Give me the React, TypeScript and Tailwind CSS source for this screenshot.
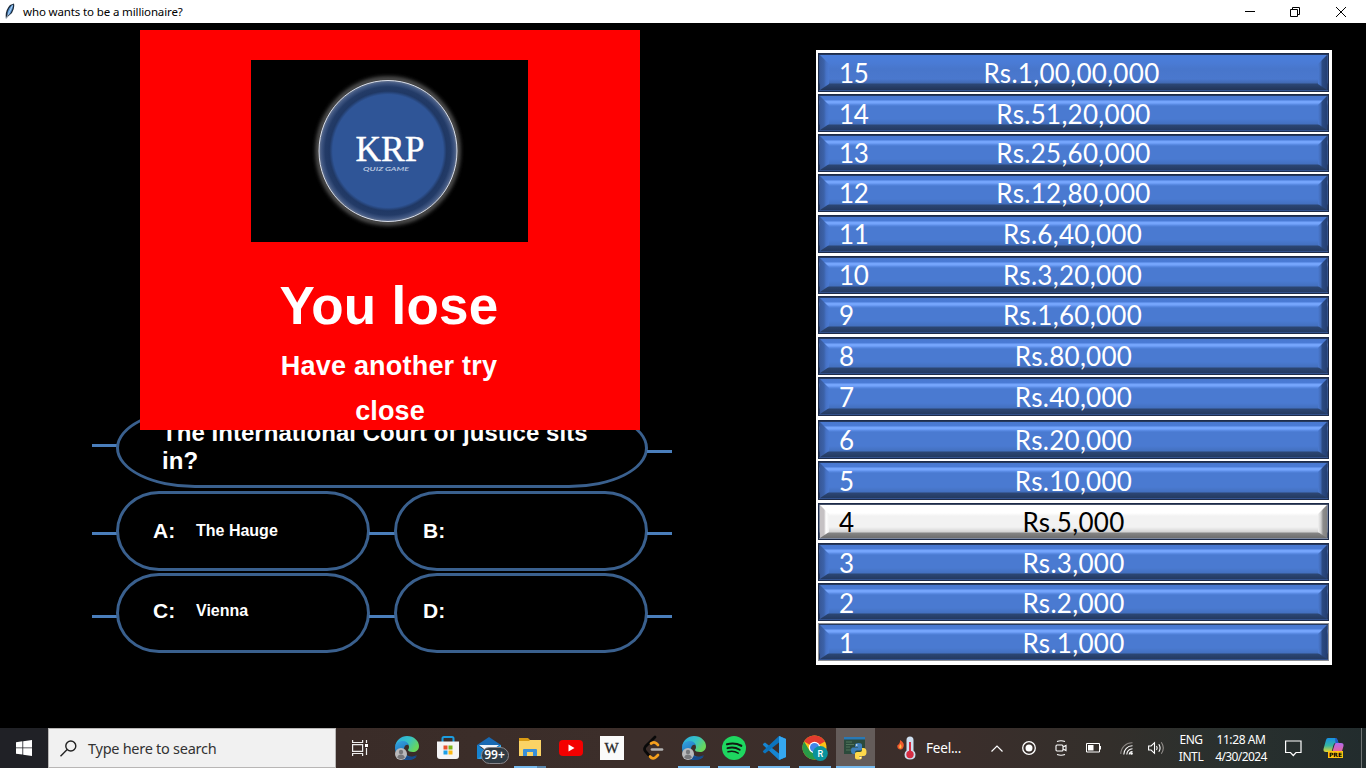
import React from "react";

const prizes = [
  { n: 15, amount: "Rs.1,00,00,000", cls: "h-[39px] mb-[2px]" },
  { n: 14, amount: "Rs.51,20,000", cls: "h-[38px] mb-[2px]" },
  { n: 13, amount: "Rs.25,60,000", cls: "h-[38px] mb-[2px]" },
  { n: 12, amount: "Rs.12,80,000", cls: "h-[38px] mb-[3px]" },
  { n: 11, amount: "Rs.6,40,000", cls: "h-[38px] mb-[3px]" },
  { n: 10, amount: "Rs.3,20,000", cls: "h-[38px] mb-[2px]" },
  { n: 9, amount: "Rs.1,60,000", cls: "h-[38px] mb-[3px]" },
  { n: 8, amount: "Rs.80,000", cls: "h-[38px] mb-[2px]" },
  { n: 7, amount: "Rs.40,000", cls: "h-[39px] mb-[4px]" },
  { n: 6, amount: "Rs.20,000", cls: "h-[39px] mb-[2px]" },
  { n: 5, amount: "Rs.10,000", cls: "h-[39px] mb-[3px]" },
  { n: 4, amount: "Rs.5,000", cls: "h-[37px] mb-[3px]" },
  { n: 3, amount: "Rs.3,000", cls: "h-[38px] mb-[2px]" },
  { n: 2, amount: "Rs.2,000", cls: "h-[38px] mb-[2px]" },
  { n: 1, amount: "Rs.1,000", cls: "h-[38px]" },
];

function PrizeRow({ n, amount, cls }: { n: number; amount: string; cls: string }) {
  const active = n === 4;
  const face = active
    ? "bg-[linear-gradient(to_bottom,#fff_0,#fff_8px,#f2f2f2_11px,#f2f2f2_calc(100%-11px),#d4d4d4_calc(100%-6px),#858585_calc(100%-5px),#6e6e6e_100%)] text-black"
    : n === 15
      ? "bg-[linear-gradient(to_bottom,#4a7edb_0,#4a7bd5_8px,#4876cb_14px,#4a78ce_calc(100%-11px),#4169b2_calc(100%-7px),#2c4775_calc(100%-6px),#213457_100%)] text-white"
      : "bg-[linear-gradient(to_bottom,#4878d0_0,#4a7bd6_4px,#75a5fc_5px,#75a5fc_7px,#5f90ea_8px,#4a7ad1_10px,#4a7ad1_calc(100%-11px),#4370bf_calc(100%-6px),#2c4673_calc(100%-5px),#243a61_100%)] text-white";
  return (
    <div className={"relative w-[511px] shrink-0 border " + (n === 1 ? "border-[#8b8d93] " : "border-[#1d2b49] ") + cls}>
      <div className={"flex h-full items-center border border-[#26395f]/60 pl-[19px] text-[26px] leading-none [font-family:Lato,sans-serif] " + (n > 13 || n === 7 || n === 5 || n < 5 ? "pt-[1px] " : "") + face}>
        <span className="w-[60px] tracking-[-0.3px]">{n}</span>
        <span className={"text-center tracking-[0.3px] " + (n === 15 ? "w-[345px]" : n > 8 && n < 12 ? "w-[347px]" : "w-[349px]")}>{amount}</span>
      </div>
      <span className={"absolute inset-y-[1px] left-[1px] w-[9px] [clip-path:polygon(0_0,100%_9px,100%_calc(100%-6px),0_100%)] " + (active ? "bg-[linear-gradient(to_right,#c5c1c3_0,#c5c1c3_4px,#fff_6px,#f2f2f2_100%)]" : "bg-[linear-gradient(to_right,#38599a_0,#3c62a8_4px,#4672c6_6px,#4a7ad1_100%)]")} />
      <span className={"absolute inset-y-[1px] right-[1px] w-[9px] [clip-path:polygon(100%_0,0_9px,0_calc(100%-6px),100%_100%)] " + (active ? "bg-[linear-gradient(to_left,#808080_0,#8d8d8d_4px,#cfcfcf_6px,#f2f2f2_100%)]" : "bg-[linear-gradient(to_left,#243f73_0,#2b4a82_5px,#4169b3_6px,#4a7ad1_100%)]")} />
    </div>
  );
}

function Wire({ cls }: { cls: string }) {
  return <span className={"h-[3px] shrink-0 bg-[#4a7ebb] " + cls} />;
}

function Answer({ label, text, cls }: { label: string; text: string; cls: string }) {
  return (
    <div className={"flex h-[80px] w-[254px] shrink-0 items-center rounded-[43px/40px] border-[3px] border-[#3a608e] font-bold text-white " + cls}>
      <span className="w-[43px] text-[21px] leading-[24px]">{label}</span>
      <span className="text-[16px] leading-[18px]">{text}</span>
    </div>
  );
}

function EdgeIcon({ id }: { id: string }) {
  return (
    <svg width="26" height="26" viewBox="0 0 26 26">
      <defs>
        <linearGradient id={id + "a"} x1="0" y1="0" x2="1" y2="0.5"><stop offset="0" stopColor="#2ba9e0" /><stop offset="0.55" stopColor="#35c1c8" /><stop offset="1" stopColor="#68d85b" /></linearGradient>
        <linearGradient id={id + "b"} x1="0" y1="0" x2="0.6" y2="1"><stop offset="0" stopColor="#35a5e2" /><stop offset="1" stopColor="#1259a6" /></linearGradient>
      </defs>
      <path d="M1 12C2 5 7 1 13 1c7 0 12 5 12 10 0 4-3 6-6 6-3 0-5-1-5-2 0-1 1-1 1-3 0-3-3-5-6-5-4 0-7 2-8 5Z" fill={"url(#" + id + "a)"} />
      <path d="M1 13c0-5 4-7 8-7 3 0 5 2 6 4-2-1-5 0-5 4 0 5 4 8 9 8 2 0 3 0 4-1-2 3-6 4-10 4C6 25 1 19 1 13Z" fill={"url(#" + id + "b)"} />
      <path d="M9 14c0 7 6 10 14 6-2 3-5 5-9 5-5-1-7-6-5-11Z" fill="#174b8b" />
      <circle cx="7" cy="19" r="6" fill="#b9b9bb" />
      <circle cx="7" cy="17" r="2.2" fill="#77777a" />
      <path d="M3.2 22.5c.5-4 7-4 7.6 0-2 2-5.500 2-7.600 0Z" fill="#77777a" />
    </svg>
  );
}

function StoreIcon() {
  return (
    <svg width="24" height="26" viewBox="0 0 24 26">
      <path d="M6.500 8V3.500Q6.500 2 8 2h8q1.500 0 1.500 1.500V8" fill="none" stroke="#1b9de0" strokeWidth="2" />
      <path d="M1 6.500h22V21q0 3-3 3H4q-3 0-3-3Z" fill="#f4f4f5" />
      <path d="M7.500 10.500h4v4h-4z" fill="#e9512c" /><path d="M12.500 10.500h4v4h-4z" fill="#7cb518" />
      <path d="M7.500 15.500h4v4h-4z" fill="#1a9fe8" /><path d="M12.500 15.500h4v4h-4z" fill="#fcb813" />
    </svg>
  );
}

function MailIcon() {
  return (
    <span className="relative flex h-[26px] w-[24px]">
      <svg width="24" height="26" viewBox="0 0 24 26">
        <path d="M0 10 12 2l12 8v2H0Z" fill="#1769b3" />
        <path d="M2 10h20l-10 8Z" fill="#eef4fa" />
        <path d="M0 10l12 8-12 6Z" fill="#1683d0" /><path d="M24 10 12 18l12 6Z" fill="#44b5f1" />
        <path d="M0 24l12-8 12 8Z" fill="#2aa0e6" />
      </svg>
      <span className="absolute top-[12px] left-[4px] flex h-[17px] w-[28px] items-center justify-center rounded-full border border-[#89868a] bg-[#303b43] pb-px text-[12px] font-semibold text-white [font-family:'Noto_Sans',sans-serif]">99+</span>
    </span>
  );
}

function FolderIcon() {
  return (
    <svg width="24" height="22" viewBox="0 0 24 22">
      <path d="M1 1h9l2 2h11v9H1Z" fill="#d99b14" />
      <path d="M1 4h10l1-1h11v16H1Z" fill="#fbd365" />
      <path d="M5 19v-6q0-1 1-1h12q1 0 1 1v6h-4v-4H9v4Z" fill="#3a8fd8" />
    </svg>
  );
}

function YouTubeIcon() {
  return (
    <svg width="24" height="18" viewBox="0 0 24 18">
      <rect y="1" width="24" height="16" rx="4" fill="#f40000" />
      <path d="M9.500 5.500v7l6-3.500Z" fill="#fff" />
    </svg>
  );
}

function LeetCodeIcon() {
  return (
    <svg width="22" height="26" viewBox="0 0 22 26" fill="none" strokeLinecap="round" strokeWidth="2.700">
      <path d="M13 2 3.500 11.500q-2 2.500 0 5L8 21.500" stroke="#090909" />
      <path d="m9 8.500 2-1q2-.5 3.500 1L16 10M8 21.500q3 3.500 6 .5L16 20" stroke="#f5a01d" />
      <path d="M10 14.500h10" stroke="#b3b3b3" />
    </svg>
  );
}

function SpotifyIcon() {
  return (
    <svg width="24" height="24" viewBox="0 0 24 24" fill="none" stroke="#101a12" strokeLinecap="round">
      <circle cx="12" cy="12" r="12" fill="#1ed760" stroke="none" />
      <path d="M5 8.300c5-1.400 10-.9 14.300 1.500" strokeWidth="2.200" />
      <path d="M5.500 12.200c4.300-1.200 8.500-.7 12.200 1.500" strokeWidth="1.900" />
      <path d="M6 15.800c3.600-.9 7-.6 10.200 1.300" strokeWidth="1.500" />
    </svg>
  );
}

function CodeIcon() {
  return (
    <svg width="24" height="24" viewBox="0 0 24 24">
      <path d="M17 0 24 3v18l-7 3L1.500 9.500q-1.300-1 0-2L3 6.500l14 11Z" fill="#1685d1" />
      <path d="M17 24 24 21V3l-7-3L1.500 14.500q-1.300 1 0 2L3 17.500l14-11Z" fill="#0b74be" />
      <path d="m17 0 7 3v18l-7 3Z" fill="#35a7f0" />
    </svg>
  );
}

function ChromeIcon() {
  return (
    <svg width="26" height="26" viewBox="0 0 26 26">
      <circle cx="12.500" cy="12.500" r="12" fill="#fbc116" />
      <path d="M12.500 12.500 2.100 6.500A12 12 0 0 1 22.900 6.500Z" fill="#e33b2e" />
      <path d="M2.100 6.500A12 12 0 0 0 12.500 24.500l5-9-10 0Z" fill="#299b48" />
      <path d="M12.500 7h10.700l-.3-.5H12.500Z" fill="#e33b2e" />
      <circle cx="12.500" cy="12.500" r="5.700" fill="#fff" /><circle cx="12.500" cy="12.500" r="4.500" fill="#4285e8" />
      <circle cx="18.300" cy="18.500" r="7.500" fill="#0a929c" />
      <text x="18.300" y="21.800" textAnchor="middle" fontFamily="Roboto" fontWeight="500" fontSize="9" fill="#fff">R</text>
    </svg>
  );
}

function PythonIcon() {
  return (
    <svg width="23" height="24" viewBox="0 0 23 24">
      <path d="M0 1h21v17H0Z" fill="#2c4a3b" /><path d="M0 1h21v2.500H0Z" fill="#2979b6" />
      <path d="M2 6h6M2 8.500h8M2 11h4M2 14h5" stroke="#50745a" />
      <path d="M14.500 7q3.500 0 3.500 2v4q0 1.500-2 1.500h-3q-2 0-2 2v1.500H9.500Q7 18 7 14.500T9.500 11.500H14V11h-3V9q0-2 3.500-2Z" fill="#3e7fb9" />
      <path d="M14.500 23.500q-3.500 0-3.500-2v-4q0-1.500 2-1.500h3q2 0 2-2v-2h1.500q3 0 3 4t-3 4H15v.5h3v1q0 2-3.500 2Z" fill="#ffd94b" />
      <circle cx="12.700" cy="9" r=".8" fill="#fff" /><circle cx="16.300" cy="21.700" r=".8" fill="#fff" />
    </svg>
  );
}

const apps = [
  { icon: <EdgeIcon id="e1" />, cls: "w-[41px]", line: "" },
  { icon: <StoreIcon />, cls: "w-[41px]", line: "" },
  { icon: <MailIcon />, cls: "w-[41px]", line: "" },
  { icon: <FolderIcon />, cls: "w-[41px]", line: "bg-[linear-gradient(to_right,#76b9ed_0,#76b9ed_23px,#5a86ab_23px)]" },
  { icon: <YouTubeIcon />, cls: "w-[41px]", line: "" },
  { icon: <span className="flex h-6 w-6 items-center justify-center bg-[#fafafa] pt-px text-[15px] text-[#222] [font-family:'Liberation_Serif',serif] [-webkit-text-stroke:0.3px_#333]">W</span>, cls: "w-[41px]", line: "" },
  { icon: <LeetCodeIcon />, cls: "w-[41px]", line: "" },
  { icon: <EdgeIcon id="e2" />, cls: "w-[41px]", line: "bg-[#76b9ed]" },
  { icon: <SpotifyIcon />, cls: "w-[40px]", line: "bg-[#76b9ed]" },
  { icon: <CodeIcon />, cls: "w-[40px]", line: "bg-[#76b9ed]" },
  { icon: <ChromeIcon />, cls: "w-[41px]", line: "bg-[#76b9ed]" },
  { icon: <PythonIcon />, cls: "ml-[1px] w-[39px] bg-[#645c5a]", line: "bg-[#76b9ed]" },
];

function Taskbar() {
  return (
    <footer className="flex h-10 w-full shrink-0 items-center bg-[linear-gradient(to_right,#202126_0,#202126_40px,#3a2c28_340px,#3c2e2a_620px,#3b2e2b_950px,#332f2b_1110px,#29302e_1230px,#222c2d_1366px)] text-white [font-family:'Noto_Sans',sans-serif]">
      <div className="flex w-12 justify-center">
        <svg width="16" height="16" viewBox="0 0 16 16" fill="#fff"><path d="M0 2.200 6.400 1.300v6.200H0ZM7.200 1.200 16 0v7.500H7.200ZM0 8.300h6.400v6.300L0 13.700ZM7.200 8.300H16V16l-8.800-1.300Z" /></svg>
      </div>
      <div className="flex h-10 w-72 items-center border border-[#b8b6b5] bg-[#f1f1f1] pl-[11px]">
        <svg width="17" height="17" viewBox="0 0 17 17" fill="none" stroke="#222" strokeWidth="1.400"><circle cx="10.800" cy="6" r="5" /><path d="M7.200 9.600.5 16.300" /></svg>
        <span className="mt-[2px] ml-[11px] text-[14.5px] tracking-[-0.27px] text-[#333]">Type here to search</span>
      </div>
      <div className="flex w-[50px] pl-4">
        <svg width="17" height="16" viewBox="0 0 17 16" fill="none" stroke="#eee" strokeWidth="1.200"><path d="M.6 0v2.500h10V0M.6 16v-2.500h10V16M.6 4.600h10v6.800H.6ZM14.500 0v3M14.500 8v7" /><path d="M13 4h3v3h-3z" fill="#fff" stroke="none" /></svg>
      </div>
      {apps.map((a, i) => (
        <div key={i} className={"relative flex h-10 shrink-0 items-center justify-center " + a.cls}>
          {a.icon}
          {a.line && <span className={"absolute bottom-0 h-[2px] " + (i === 11 ? "w-[39px] " : "w-8 ") + a.line} />}
        </div>
      ))}
      <div className="ml-[22px] flex w-[72px] items-center">
        <svg width="19" height="24" viewBox="0 0 19 24">
          <path d="M3 4q5 3 3.500 7Q5.500 14 3 13.500 0 13 .3 9.500L2 8Q3.500 6 3 4Z" fill="#f15a2c" /><path d="M3.500 8q2 3 0 4.500Q1 12 3.500 8Z" fill="#ffc04a" />
          <path d="M9.500 4q0-3.500 3.500-3.500t3.500 3.500v10.500q2 1.500 2 4 0 5-5.500 5t-5.500-5q0-2.500 2-4Z" fill="#cfdff0" />
          <circle cx="13" cy="18.500" r="3.700" fill="#d62d43" /><path d="M12 6h2v10h-2Z" fill="#d62d43" />
        </svg>
        <span className="ml-[10px] text-[13.500px] tracking-[-0.2px]">Feel...</span>
      </div>
      <div className="flex w-[56px] justify-center pr-[1px]"><svg width="12" height="7" viewBox="0 0 12 7" fill="none" stroke="#fff" strokeWidth="1.200"><path d="m.5 6.500 5.500-5.500 5.500 5.500" /></svg></div>
      <div className="flex w-2 justify-center"><svg className="shrink-0" width="14" height="14" viewBox="0 0 14 14"><circle cx="7" cy="7" r="6.300" fill="none" stroke="#fff" strokeWidth="1.300" /><circle cx="7" cy="7" r="3.500" fill="#fff" /></svg></div>
      <div className="flex w-[56px] justify-center"><svg width="12" height="16" viewBox="0 0 12 16" fill="none" stroke="#fff" strokeWidth="1.100"><rect x="1" y="5" width="7" height="6" rx="1" /><path d="M8 7l3-1.500v5L8 9M2 1.500q4-1.500 8 0M2 14.500q4 1.500 8 0" /></svg></div>
      <div className="flex w-2 justify-center"><svg className="shrink-0" width="15" height="10" viewBox="0 0 15 10"><path d="M.5.5h13v8.500H.5Z" fill="none" stroke="#fff" /><path d="M2 2h5.500v5.500H2ZM14 3h1v3.500h-1Z" fill="#fff" /></svg></div>
      <div className="flex w-[58px] justify-center"><svg width="13" height="13" viewBox="0 0 13 13" fill="none" stroke="#fff" strokeWidth="1.100"><path d="M.8 12A11.200 11.200 0 0 1 12.500.8" stroke="#8a8582" /><path d="M3.800 12.500A8.500 8.500 0 0 1 12.500 3.800M6.800 12.500A5.700 5.700 0 0 1 12.500 6.800M9.200 12.500A3.300 3.300 0 0 1 12.500 9.500" /><circle cx="11.500" cy="11.500" r="1.300" fill="#fff" stroke="none" /></svg></div>
      <div className="flex w-[3px] justify-center"><svg className="shrink-0" width="17" height="14" viewBox="0 0 17 14" fill="none" stroke="#fff" strokeWidth="1.100"><path d="M.6 5h2.500L6.500 1.700v10.600L3.100 9H.6ZM8.500 5q1.400 2 0 4M10.800 3.200q2.600 3.800 0 7.600" /><path d="M13.300 1.200q4 5.800 0 11.600" stroke="#928e8b" /></svg></div>
      <div className="ml-[14px] flex w-[38px] flex-col items-center text-[12px] leading-[17px]"><span className="tracking-[-0.5px]">ENG</span><span className="tracking-[-0.4px]">INTL</span></div>
      <div className="ml-[2px] flex w-[58px] flex-col items-center text-[12px] leading-[17px] whitespace-nowrap"><span className="tracking-[-0.4px]">11:28 AM</span><span className="tracking-[-0.6px]">4/30/2024</span></div>
      <div className="ml-[15px] flex w-4"><svg className="shrink-0" width="17" height="17" viewBox="0 0 17 17" fill="none" stroke="#fff" strokeWidth="1.200"><path d="M.6 1h15.400v11.500h-5L8.300 15.500 5.500 12.500H.6Z" /></svg></div>
      <div className="relative ml-[22px] flex h-[20px] w-[21px]">
        <svg width="21" height="20" viewBox="0 0 21 20">
          <defs>
            <linearGradient id="cpl" x2="0" y2="1"><stop stopColor="#1691e5" /><stop offset=".55" stopColor="#38b6a0" /><stop offset="1" stopColor="#e8d72c" /></linearGradient>
            <linearGradient id="cpr" x2="0" y2="1"><stop stopColor="#b169ee" /><stop offset="1" stopColor="#f4658a" /></linearGradient>
          </defs>
          <path d="M5 0h7q2 0 2.500 2l1 3h-3q-1.500 0-2 2L8.500 14H3Q0 14 .5 11L3 2Q3.500 0 5 0Z" fill="url(#cpl)" />
          <path d="M13 5h5q3 0 2.500 3l-2 7H9l2.500-8q.5-2 1.500-2Z" fill="url(#cpr)" />
          <path d="M12 0q2 0 2.500 2l1 3h-3Z" fill="#2359cb" />
        </svg>
        <span className="absolute top-[13px] left-[5px] flex h-[7px] w-[15px] items-center justify-center bg-[#ffc410] text-[6px] font-bold text-black [font-family:'DejaVu_Sans',sans-serif]">PRE</span>
      </div>
      <span className="ml-[17px] h-10 w-px bg-[#707575]" />
    </footer>
  );
}

export default function App() {
  return (
    <div className="relative flex h-[768px] w-[1366px] flex-col overflow-hidden bg-black [font-family:'Liberation_Sans',sans-serif]">
      <header className="flex h-[23px] shrink-0 items-center bg-white pl-[5px]">
        <svg width="10" height="17" viewBox="0 0 10 17"><path d="M1 16Q-.5 8 5 2l4-1.500Q10 5 7 10l-4 3.500Z" fill="#1c2a3a" /><path d="M2.300 11.500Q2.500 6 7 2l1.200-.3Q7.500 8 4 12Z" fill="#5b9bdc" /><path d="M1 16 7.500 2.500" stroke="#d8e8f6" strokeWidth=".7" /></svg>
        <span className="ml-2 flex-1 text-[11.500px] tracking-[-0.13px] text-black [font-family:'Noto_Sans',sans-serif]">who wants to be a millionaire?</span>
        <svg className="mr-[35px]" width="10" height="10" viewBox="0 0 10 10"><path d="M0 4.500h10" stroke="#000" /></svg>
        <svg className="mr-9" width="10" height="10" viewBox="0 0 10 10" fill="none" stroke="#000"><path d="M.5 2.500h7v7h-7ZM2.500 2.500v-2h7v7h-2" /></svg>
        <svg className="mr-5" width="10" height="10" viewBox="0 0 10 10"><path d="m0 0 10 10M10 0 0 10" stroke="#000" /></svg>
      </header>

      <main className="flex min-h-0 flex-1">
        <section className="mt-[385px] ml-[92px] flex w-[580px] flex-col">
          <div className="flex h-[80px] items-center">
            <Wire cls="w-[25px] mb-[6px]" />
            <div className="mx-[-1px] h-[80px] w-[532px] shrink-0 rounded-[79px/40px] border-[3px] border-[#3a608e] pt-[8px] pl-[43px] text-[24px] leading-[28px] font-bold tracking-[0.04px] text-white">
              <p className="w-[440px]">The International Court of justice sits in?</p>
            </div>
            <Wire cls="w-[25px] mt-[7px]" />
          </div>
          {[["A:", "The Hauge", "B:", ""], ["C:", "Vienna", "D:", ""]].map((r, i) => (
            <div key={i} className={"flex h-[80px] items-center " + (i ? "mt-[2px]" : "mt-[3px]")}>
              <Wire cls={"w-[25px] " + (i ? "mt-[7px]" : "mt-[5px]")} />
              <div className="ml-[-1px]"><Answer label={r[0]} text={r[1]} cls={i ? "pl-[34px] pb-[4px]" : "pl-[34px]"} /></div>
              <Wire cls={"w-[26px] ml-[-1px] " + (i ? "mt-[7px]" : "mt-[5px]")} />
              <div className="ml-[-1px]"><Answer label={r[2]} text={r[3]} cls={i ? "pl-[26px] pb-[4px]" : "pl-[26px]"} /></div>
              <Wire cls={"w-[25px] ml-[-1px] " + (i ? "mt-[7px]" : "mt-[5px]")} />
            </div>
          ))}
        </section>

        <aside className="mt-[27px] ml-[144px] flex h-[615px] w-[516px] flex-col bg-white pt-[3px] pl-[2px]">
          {prizes.map((p) => <PrizeRow key={p.n} {...p} />)}
        </aside>
      </main>

      <Taskbar />

      <div className="absolute top-[30px] left-[140px] flex h-[400px] w-[500px] flex-col items-center bg-[#ff0000] pt-[30px] font-bold text-white">
        <svg className="mr-[1px] shrink-0" width="277" height="182" viewBox="0 0 277 182">
          <defs>
            <filter id="soft" x="-20%" y="-20%" width="140%" height="140%"><feGaussianBlur stdDeviation="2" /></filter>
            <radialGradient id="disc"><stop offset="0.800" stopColor="#2f5597" /><stop offset="0.850" stopColor="#203864" /><stop offset="0.910" stopColor="#233b67" /><stop offset="0.960" stopColor="#3d5480" /><stop offset="1" stopColor="#657491" /></radialGradient>
          </defs>
          <rect width="277" height="182" fill="#000" />
          <ellipse cx="137" cy="91" rx="70" ry="72" fill="none" stroke="#6a6a6a" strokeWidth="4" filter="url(#soft)" />
          <ellipse cx="137" cy="91" rx="69" ry="70.500" fill="url(#disc)" stroke="#d8dde8" strokeWidth="1" />
          <text x="139" y="100.5" textAnchor="middle" fontFamily="Liberation Serif" fontSize="35.5" fontWeight="400" fill="#fff" stroke="#fff" strokeWidth="0.4" textLength="69" lengthAdjust="spacingAndGlyphs">KRP</text>
          <text x="135" y="111" textAnchor="middle" fontFamily="Lato" fontStyle="italic" fontSize="5.500" fontWeight="700" fill="#b4c3de" textLength="46" lengthAdjust="spacingAndGlyphs">QUIZ GAME</text>
        </svg>
        <h1 className="mt-[34px] mr-[2px] text-[53px] leading-[60px] tracking-[0.25px]">You lose</h1>
        <p className="mt-[15px] mr-[2px] text-[27px] leading-[30px] tracking-[0.2px]">Have another try</p>
        <button className="mt-[15px] text-[27px] leading-[30px] tracking-[0.1px]">close</button>
      </div>
    </div>
  );
}
